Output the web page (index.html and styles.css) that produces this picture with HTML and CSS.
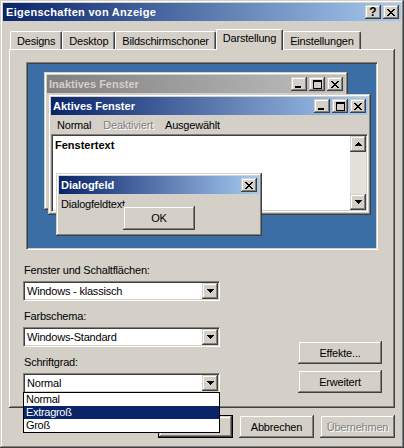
FILE: index.html
```html
<!DOCTYPE html>
<html lang="de">
<head>
    <meta charset="UTF-8">
    <title>Eigenschaften von Anzeige</title>
    <link rel="stylesheet" href="styles.css">
</head>
<body>

    <div class="window">
        <div class="titlebar">
            <span class="title">Eigenschaften von Anzeige</span>
            <div class="caption-btns">
                <span class="cbtn help">?</span>
                <span class="cbtn">
                    <svg width="8" height="7" viewBox="0 0 8 7"><path d="M0 0h2v1H0zM6 0h2v1H6zM1 1h2v1H1zM5 1h2v1H5zM2 2h4v1H2zM3 3h2v1H3zM2 4h4v1H2zM1 5h2v1H1zM5 5h2v1H5zM0 6h2v1H0zM6 6h2v1H6z"/></svg>
                </span>
            </div>
        </div>

        <div class="tabs">
            <div class="tab">Designs</div>
            <div class="tab">Desktop</div>
            <div class="tab">Bildschirmschoner</div>
            <div class="tab active">Darstellung</div>
            <div class="tab">Einstellungen</div>
        </div>

        <div class="panel">
            <!-- preview of the window appearance -->
            <div class="preview">
                <div class="win inactive">
                    <div class="win-title">
                        <span>Inaktives Fenster</span>
                        <div class="caption-btns">
                            <span class="cbtn"><svg width="8" height="7" viewBox="0 0 8 7"><path d="M0 5h6v2H0z"/></svg></span>
                            <span class="cbtn"><svg width="9" height="9" viewBox="0 0 9 9"><path d="M0 0h9v2H0zM0 2h1v7H0zM8 2h1v7H8zM0 8h9v1H0z"/></svg></span>
                            <span class="cbtn close"><svg width="8" height="7" viewBox="0 0 8 7"><path d="M0 0h2v1H0zM6 0h2v1H6zM1 1h2v1H1zM5 1h2v1H5zM2 2h4v1H2zM3 3h2v1H3zM2 4h4v1H2zM1 5h2v1H1zM5 5h2v1H5zM0 6h2v1H0zM6 6h2v1H6z"/></svg></span>
                        </div>
                    </div>
                </div>

                <div class="win active">
                    <div class="win-title">
                        <span>Aktives Fenster</span>
                        <div class="caption-btns">
                            <span class="cbtn"><svg width="8" height="7" viewBox="0 0 8 7"><path d="M0 5h6v2H0z"/></svg></span>
                            <span class="cbtn"><svg width="9" height="9" viewBox="0 0 9 9"><path d="M0 0h9v2H0zM0 2h1v7H0zM8 2h1v7H8zM0 8h9v1H0z"/></svg></span>
                            <span class="cbtn close"><svg width="8" height="7" viewBox="0 0 8 7"><path d="M0 0h2v1H0zM6 0h2v1H6zM1 1h2v1H1zM5 1h2v1H5zM2 2h4v1H2zM3 3h2v1H3zM2 4h4v1H2zM1 5h2v1H1zM5 5h2v1H5zM0 6h2v1H0zM6 6h2v1H6z"/></svg></span>
                        </div>
                    </div>
                    <div class="menu">
                        <span>Normal</span>
                        <span class="disabled">Deaktiviert</span>
                        <span>Ausgewählt</span>
                    </div>
                    <div class="textarea">
                        <div class="text-body">Fenstertext</div>
                        <div class="scrollbar">
                            <span class="sbtn"><svg width="7" height="4" viewBox="0 0 7 4"><path d="M3 0h1v1H3zM2 1h3v1H2zM1 2h5v1H1zM0 3h7v1H0z"/></svg></span>
                            <span class="sbtn"><svg width="7" height="4" viewBox="0 0 7 4"><path d="M0 0h7v1H0zM1 1h5v1H1zM2 2h3v1H2zM3 3h1v1H3z"/></svg></span>
                        </div>
                    </div>
                </div>

                <div class="win dialog">
                    <div class="win-title">
                        <span>Dialogfeld</span>
                        <span class="cbtn close"><svg width="8" height="7" viewBox="0 0 8 7"><path d="M0 0h2v1H0zM6 0h2v1H6zM1 1h2v1H1zM5 1h2v1H5zM2 2h4v1H2zM3 3h2v1H3zM2 4h4v1H2zM1 5h2v1H1zM5 5h2v1H5zM0 6h2v1H0zM6 6h2v1H6z"/></svg></span>
                    </div>
                    <div class="dialog-text">Dialogfeldtext</div>
                    <button class="btn dialog-ok">OK</button>
                </div>
            </div>

            <div class="settings">
                <div class="fields">
                    <label class="field-label">Fenster und Schaltflächen:</label>
                    <div class="combo">
                        <span class="combo-value">Windows - klassisch</span>
                        <span class="combo-btn"><svg width="7" height="4" viewBox="0 0 7 4"><path d="M0 0h7v1H0zM1 1h5v1H1zM2 2h3v1H2zM3 3h1v1H3z"/></svg></span>
                    </div>

                    <label class="field-label">Farbschema:</label>
                    <div class="combo">
                        <span class="combo-value">Windows-Standard</span>
                        <span class="combo-btn"><svg width="7" height="4" viewBox="0 0 7 4"><path d="M0 0h7v1H0zM1 1h5v1H1zM2 2h3v1H2zM3 3h1v1H3z"/></svg></span>
                    </div>

                    <label class="field-label">Schriftgrad:</label>
                    <div class="combo">
                        <span class="combo-value">Normal</span>
                        <span class="combo-btn"><svg width="7" height="4" viewBox="0 0 7 4"><path d="M0 0h7v1H0zM1 1h5v1H1zM2 2h3v1H2zM3 3h1v1H3z"/></svg></span>
                        <ul class="droplist">
                            <li>Normal</li>
                            <li class="selected">Extragroß</li>
                            <li>Groß</li>
                        </ul>
                    </div>
                </div>

                <div class="side-btns">
                    <button class="btn">Effekte...</button>
                    <button class="btn">Erweitert</button>
                </div>
            </div>
        </div>

        <div class="actions">
            <button class="btn default">OK</button>
            <button class="btn">Abbrechen</button>
            <button class="btn" disabled>Übernehmen</button>
        </div>
    </div>

</body>
</html>
```

FILE: styles.css
```css
* {
    margin: 0;
    padding: 0;
    box-sizing: border-box;
}

body {
    font-family: "Liberation Sans", Arial, sans-serif;
    font-size: 11px;
    color: #000;
    background: #D4D0C8;
}

/* classic raised 3d edge */
.window,
.cbtn,
.btn,
.sbtn,
.combo-btn,
.win {
    box-shadow: inset -1px -1px #404040, inset 1px 1px #D4D0C8,
                inset -2px -2px #808080, inset 2px 2px #fff;
}

.window {
    width: 404px;
    height: 448px;
    padding: 3px;
    background: #D4D0C8;
    display: flex;
    flex-direction: column;
}

.titlebar,
.win-title {
    height: 18px;
    flex-shrink: 0;
    display: flex;
    align-items: center;
    justify-content: space-between;
    padding: 0 2px 0 2px;
    background: linear-gradient(to right, #0A246A, #A6CAF0);
    color: #fff;
    font-weight: bold;
}

.title {
    letter-spacing: 0.3px;
    padding-left: 1px;
}

.caption-btns {
    display: flex;
    gap: 2px;
}

.cbtn {
    width: 16px;
    height: 14px;
    background: #D4D0C8;
    display: flex;
    align-items: center;
    justify-content: center;
    color: #000;
    font-size: 12px;
}

.caption-btns .cbtn + .close {
    margin-left: 0;
}

.help {
    font-weight: bold;
    line-height: 14px;
}

svg {
    display: block;
    shape-rendering: crispEdges;
}

/* tabs */
.tabs {
    display: flex;
    align-items: flex-end;
    height: 20px;
    margin: 8px 6px 0;
    padding-left: 1px;
}

.tab {
    height: 18px;
    padding: 2px 6px 0;
    line-height: 15px;
    border: 1px solid;
    border-color: #fff #404040 transparent #fff;
    border-bottom: none;
    border-radius: 2px 2px 0 0;
    box-shadow: inset -1px 0 #808080;
    letter-spacing: -0.2px;
}

.tab.active {
    height: 21px;
    margin-bottom: -1px;
    padding-top: 1px;
    position: relative;
    z-index: 1;
    background: #D4D0C8;
}

.panel {
    height: 359px;
    margin: 0 6px;
    padding: 13px 13px 0 14px;
    box-shadow: inset -1px -1px #404040, inset 1px 1px #fff, inset -2px -2px #808080;
}

/* appearance preview */
.preview {
    position: relative;
    width: 352px;
    height: 188px;
    margin-left: 3px;
    background: #3A6EA5;
    border: 1px solid;
    border-color: #808080 #fff #fff #808080;
    box-shadow: inset 1px 1px #404040, inset -1px -1px #D4D0C8;
}

.win {
    position: absolute;
    display: flex;
    flex-direction: column;
    padding: 3px;
    background: #D4D0C8;
}

.win.inactive {
    left: 17px;
    top: 9px;
    width: 304px;
    height: 138px;
}

.win.active {
    left: 21px;
    top: 31px;
    width: 323px;
    height: 121px;
}

.win.dialog {
    left: 29px;
    top: 110px;
    width: 206px;
    height: 63px;
}

.inactive .win-title {
    background: linear-gradient(to right, #808080, #C0C0C0);
    color: #D4D0C8;
}

.menu {
    height: 19px;
    flex-shrink: 0;
    display: flex;
    align-items: center;
    letter-spacing: -0.2px;
}

.menu span {
    padding: 0 6px;
}

.menu .disabled,
.btn:disabled {
    color: #808080;
    text-shadow: 1px 1px #fff;
}

.textarea {
    flex: 1;
    display: flex;
    padding: 1px;
    background: #fff;
    border: 1px solid;
    border-color: #808080 #fff #fff #808080;
    box-shadow: inset 1px 1px #404040, inset -1px -1px #D4D0C8;
}

.text-body {
    flex: 1;
    padding: 3px 2px;
    font-weight: bold;
    line-height: 13px;
}

.scrollbar {
    width: 16px;
    display: flex;
    flex-direction: column;
    justify-content: space-between;
    background: #E4E1DB;
}

.sbtn,
.combo-btn {
    width: 16px;
    height: 16px;
    background: #D4D0C8;
    display: flex;
    align-items: center;
    justify-content: center;
}

.dialog-text {
    padding: 4px 2px;
    line-height: 13px;
    letter-spacing: -0.2px;
}

.btn {
    border: none;
    background: #D4D0C8;
    font: inherit;
    color: #000;
    letter-spacing: -0.2px;
}

.dialog-ok {
    position: absolute;
    left: 67px;
    top: 33px;
    width: 72px;
    height: 24px;
}

/* settings below preview */
.settings {
    display: flex;
    justify-content: space-between;
    align-items: flex-end;
    margin-top: 14px;
}

.fields {
    width: 197px;
}

.field-label {
    display: block;
    line-height: 13px;
    margin-bottom: 4px;
    padding-left: 1px;
    letter-spacing: -0.2px;
}

.combo {
    position: relative;
    height: 20px;
    margin-bottom: 9px;
    display: flex;
    align-items: center;
    padding: 1px;
    background: #fff;
    border: 1px solid;
    border-color: #808080 #fff #fff #808080;
    box-shadow: inset 1px 1px #404040, inset -1px -1px #D4D0C8;
}

.combo:last-child {
    margin-bottom: 0;
}

.combo-value {
    flex: 1;
    padding-left: 2px;
    letter-spacing: -0.2px;
}

.droplist {
    position: absolute;
    left: -1px;
    right: -1px;
    top: 100%;
    z-index: 10;
    list-style: none;
    background: #fff;
    border: 1px solid #000;
}

.droplist li {
    line-height: 13px;
    padding-left: 2px;
    letter-spacing: -0.3px;
}

.droplist .selected {
    background: #0A246A;
    color: #fff;
}

.side-btns {
    display: flex;
    flex-direction: column;
    gap: 6px;
}

.side-btns .btn {
    width: 84px;
    height: 23px;
}

/* dialog buttons */
.actions {
    display: flex;
    justify-content: flex-end;
    gap: 6px;
    margin-top: 7px;
    padding-right: 6px;
}

.actions .btn {
    width: 75px;
    height: 23px;
}

.btn.default {
    border: 1px solid #000;
}
```
